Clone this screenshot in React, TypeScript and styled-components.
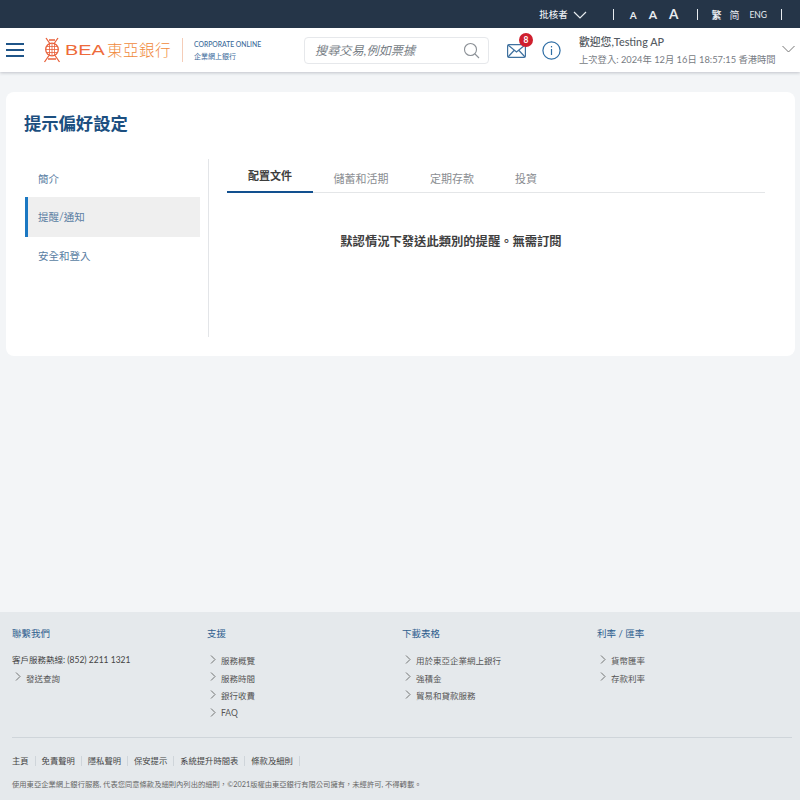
import React from "react";
import styled, { createGlobalStyle } from "styled-components";

const FONT = `Lato, "Noto Sans CJK TC", "Noto Sans", sans-serif`;

const Global = createGlobalStyle`
  html, body { margin: 0; padding: 0; background: #f3f5f7; }
  * { box-sizing: border-box; }
  body { font-family: ${FONT}; }
`;

const Page = styled.div`
  width: 800px;
  height: 800px;
  display: flex;
  flex-direction: column;
  overflow: hidden;
  background: #f3f5f7;
`;

const TopBar = styled.div`
  height: 28px;
  flex: none;
  background: #253548;
  color: #e8ecf0;
  display: flex;
  align-items: center;
  justify-content: flex-end;
  padding: 1px 18px 0 0;
`;
const Role = styled.span`
  font-size: 9.5px;
  font-weight: 500;
  line-height: 12px;
`;
const TopChevron = styled.svg`
  width: 14px;
  height: 8px;
  margin: 0 26px 0 5px;
`;
const Sep = styled.span`
  width: 1px;
  height: 11px;
  background: #e8ecf0;
`;
const SizeGroup = styled.div`
  display: flex;
  align-items: baseline;
  gap: 12px;
  margin: 0 19px 0 16px;
  font-weight: 700;
`;
const SizeA = styled.span<{ $s: number }>`
  font-size: ${(p) => p.$s}px;
  line-height: 14px;
`;
const LangGroup = styled.div`
  display: flex;
  align-items: center;
  margin: 0 14px 0 13px;
  font-size: 10px;
  line-height: 12px;
`;
const LangBold = styled.span`
  font-weight: 700;
  margin-right: 8px;
`;
const LangEng = styled.span`
  font-size: 8.5px;
  margin-left: 10px;
`;

const Header = styled.header`
  height: 44px;
  flex: none;
  background: #fff;
  box-shadow: 0 1px 3px rgba(60, 70, 85, 0.28);
  display: flex;
  align-items: center;
  position: relative;
  padding-left: 6px;
`;
const Burger = styled.div`
  width: 18px;
  display: flex;
  flex-direction: column;
  gap: 4px;
  margin-right: 19px;
`;
const BurgerLine = styled.span`
  height: 2px;
  background: #1f5488;
`;
const LogoWrap = styled.div`
  display: flex;
  align-items: center;
  height: 26px;
`;
const LogoLatin = styled.span`
  font-family: "Liberation Sans", sans-serif;
  font-size: 15.5px;
  line-height: 20px;
  color: #ee6a3a;
  margin-left: 4px;
  transform: scaleX(1.28);
  transform-origin: left center;
  width: 42px;
`;
const LogoCjk = styled.span`
  font-size: 15.5px;
  line-height: 20px;
  font-weight: 300;
  color: #f08a3c;
  width: 64px;
  letter-spacing: 0.5px;
  white-space: nowrap;
`;
const LogoDivider = styled.span`
  width: 1px;
  height: 24px;
  background: #f5cdb8;
  margin: 0 11px 0 11px;
`;
const Corp = styled.div`
  display: flex;
  flex-direction: column;
  width: 110px;
`;
const CorpEn = styled.span`
  font-size: 6.8px;
  line-height: 10px;
  font-weight: 500;
  color: #3a6a9a;
  white-space: nowrap;
`;
const CorpZh = styled.span`
  font-size: 7px;
  line-height: 10px;
  margin-top: 2px;
  color: #3a6a9a;
`;
const Search = styled.div`
  width: 185px;
  height: 27px;
  border: 1px solid #e6e8eb;
  border-radius: 4px;
  display: flex;
  align-items: center;
  justify-content: space-between;
  padding: 0 8px 0 10px;
  margin-right: 18px;
`;
const SearchHint = styled.span`
  font-size: 12.2px;
  font-style: italic;
  color: #777e86;
  white-space: nowrap;
`;
const IconSlot = styled.div`
  position: relative;
  width: 19px;
  height: 17px;
  margin-right: 16px;
`;
const Badge = styled.span`
  position: absolute;
  top: -9px;
  right: -7px;
  width: 14px;
  height: 14px;
  border-radius: 50%;
  background: #cf1f2e;
  color: #fff;
  font-size: 8.5px;
  font-weight: 700;
  line-height: 14px;
  text-align: center;
`;
const Welcome = styled.div`
  margin-left: 18px;
  display: flex;
  flex-direction: column;
  white-space: nowrap;
`;
const WelcomeName = styled.span`
  font-size: 10.8px;
  line-height: 14px;
  font-weight: 500;
  color: #555b62;
`;
const LastLogin = styled.span`
  font-size: 9.3px;
  line-height: 12px;
  margin-top: 5px;
  color: #777c83;
`;
const UserChevron = styled.svg`
  position: absolute;
  right: 5px;
  top: 17px;
  width: 13px;
  height: 8px;
`;

const Main = styled.main`
  flex: 1;
  padding: 20px 5px 0 6px;
`;
const Card = styled.section`
  height: 264px;
  background: #fff;
  border-radius: 8px;
  padding: 20px 30px 19px 18px;
`;
const Title = styled.h1`
  margin: 0;
  font-size: 17.3px;
  line-height: 24px;
  font-weight: 700;
  color: #1c4f80;
`;
const CardBody = styled.div`
  display: flex;
  margin-top: 23px;
  height: 178px;
`;
const Side = styled.nav`
  width: 185px;
  flex: none;
  border-right: 1px solid #e3e5e8;
  padding: 0 8px 0 1px;
`;
const SideItem = styled.div<{ $active?: boolean }>`
  height: ${(p) => (p.$active ? "40px" : "38px")};
  margin-top: ${(p) => (p.$active ? "18px" : "0")};
  display: flex;
  align-items: center;
  padding-left: ${(p) => (p.$active ? "10px" : "13px")};
  padding-bottom: ${(p) => (p.$active ? "1px" : "2px")};
  border-left: ${(p) => (p.$active ? "3px solid #1b78c2" : "none")};
  background: ${(p) => (p.$active ? "#efefef" : "transparent")};
  font-size: 10.5px;
  color: #5a7ea3;
`;
const SideFirst = styled(SideItem)`
  margin-bottom: -18px;
  padding-bottom: 0;
`;
const Content = styled.div`
  flex: 1;
  padding: 0 0 0 18px;
`;
const Tabs = styled.div`
  height: 34px;
  border-bottom: 1px solid #e4e6e8;
  display: flex;
`;
const Tab = styled.div<{ $active?: boolean; $w: number }>`
  width: ${(p) => p.$w}px;
  flex: none;
  height: 34px;
  display: flex;
  align-items: center;
  justify-content: center;
  padding-top: ${(p) => (p.$active ? "0" : "4px")};
  font-size: 11px;
  font-weight: ${(p) => (p.$active ? 700 : 400)};
  color: ${(p) => (p.$active ? "#3d3d3d" : "#8a8d91")};
  border-bottom: ${(p) => (p.$active ? "2px solid #12508f" : "none")};
  white-space: nowrap;
`;
const Notice = styled.div`
  margin-top: 40px;
  text-align: center;
  font-size: 12.3px;
  line-height: 18px;
  font-weight: 700;
  color: #3f3f3f;
  padding-right: 90px;
`;

const Footer = styled.footer`
  height: 188px;
  flex: none;
  background: #e5e9ec;
  padding: 15px 8px 0 12px;
`;
const Columns = styled.div`
  display: grid;
  grid-template-columns: repeat(4, 195px);
  height: 111px;
  border-bottom: 1px solid #cfd5da;
`;
const Column = styled.div`
  display: flex;
  flex-direction: column;
`;
const ColHead = styled.h3`
  margin: 0 0 10.5px;
  font-size: 9.5px;
  line-height: 14px;
  font-weight: 400;
  color: #2f5f8f;
`;
const Hotline = styled.div`
  font-size: 8.5px;
  line-height: 17.5px;
  color: #444;
`;
const LinkRow = styled.div`
  display: flex;
  align-items: center;
  height: 17.6px;
  font-size: 8.5px;
  color: #555;
`;
const Chev = styled.svg`
  width: 6px;
  height: 9px;
  margin: -2px 5px 0 3px;
  flex: none;
`;
const BottomLinks = styled.div`
  display: flex;
  margin-top: 18px;
`;
const BottomLink = styled.span`
  font-size: 8.3px;
  line-height: 10px;
  color: #444;
  padding-right: 6px;
  margin-right: 6px;
  border-right: 1px solid #cfd5da;
`;
const Legal = styled.p`
  margin: 14px 0 0;
  font-size: 7.3px;
  line-height: 10px;
  color: #666;
  white-space: nowrap;
`;

const ChevIcon = () => (
  <Chev viewBox="0 0 6 9" fill="none" stroke="#555" strokeWidth="0.8">
    <path d="M1 .5 5 4.5 1 8.5" />
  </Chev>
);

const Link = ({ children }: { children: React.ReactNode }) => (
  <LinkRow>
    <ChevIcon />
    {children}
  </LinkRow>
);

const BeaMark = () => (
  <svg width="18" height="26" viewBox="0 0 18 26" fill="none" stroke="#e9603a" strokeWidth="1.3">
    <path d="M3 1l3.5 5M15 1l-3.5 5M6 3h6" />
    <circle cx="9" cy="12.5" r="6.3" />
    <path d="M3.500 9.500h11M3 12.500h12M3.500 15.500h11M9 6.500v12M6.500 6.800v11.400M11.500 6.800v11.400" strokeWidth="0.8" />
    <path d="M6 18.500 1.500 25M12 18.500 16.500 25M5 22h8" />
  </svg>
);

export default function App() {
  return (
    <Page>
      <Global />
      <TopBar>
        <Role>批核者</Role>
        <TopChevron viewBox="0 0 14 8" fill="none" stroke="#e8ecf0" strokeWidth="1.2">
          <path d="M1 1l6 6 6-6" />
        </TopChevron>
        <Sep />
        <SizeGroup>
          <SizeA $s={10}>A</SizeA>
          <SizeA $s={12}>A</SizeA>
          <SizeA $s={13.5}>A</SizeA>
        </SizeGroup>
        <Sep />
        <LangGroup>
          <LangBold>繁</LangBold>
          <span>简</span>
          <LangEng>ENG</LangEng>
        </LangGroup>
        <Sep />
      </TopBar>
      <Header>
        <Burger>
          <BurgerLine />
          <BurgerLine />
          <BurgerLine />
        </Burger>
        <LogoWrap>
          <BeaMark />
          <LogoLatin>BEA</LogoLatin>
          <LogoCjk>東亞銀行</LogoCjk>
          <LogoDivider />
        </LogoWrap>
        <Corp>
          <CorpEn>CORPORATE ONLINE</CorpEn>
          <CorpZh>企業網上銀行</CorpZh>
        </Corp>
        <Search>
          <SearchHint>搜尋交易,例如票據</SearchHint>
          <svg width="17" height="17" viewBox="0 0 17 17" fill="none" stroke="#8b9096" strokeWidth="1.1">
            <circle cx="7.5" cy="7.5" r="6" />
            <path d="M12 12l4 4" />
          </svg>
        </Search>
        <IconSlot>
          <svg width="19" height="17" viewBox="0 0 19 17" fill="none" stroke="#3f719f" strokeWidth="1.2">
            <rect x=".6" y="2.6" width="17.8" height="12.8" rx="1.4" />
            <path d="M1 3l8.5 7L18 3M1 15l6-6.5M18 15l-6-6.5" />
          </svg>
          <Badge>8</Badge>
        </IconSlot>
        <svg width="19" height="19" viewBox="0 0 19 19" fill="none" stroke="#2f6ea5" strokeWidth="1.2">
          <circle cx="9.5" cy="9.5" r="8.6" />
          <path d="M9.500 8v6" />
          <path d="M9.500 5v1.400" />
        </svg>
        <Welcome>
          <WelcomeName>歡迎您,Testing AP</WelcomeName>
          <LastLogin>上次登入: 2024年 12月 16日 18:57:15 香港時間</LastLogin>
        </Welcome>
        <UserChevron viewBox="0 0 13 8" fill="none" stroke="#777" strokeWidth="1">
          <path d="M.5 1l6 6 6-6" />
        </UserChevron>
      </Header>
      <Main>
        <Card>
          <Title>提示偏好設定</Title>
          <CardBody>
            <Side>
              <SideFirst>簡介</SideFirst>
              <SideItem $active>提醒/通知</SideItem>
              <SideItem>安全和登入</SideItem>
            </Side>
            <Content>
              <Tabs>
                <Tab $active $w={86}>配置文件</Tab>
                <Tab $w={96}>儲蓄和活期</Tab>
                <Tab $w={86}>定期存款</Tab>
                <Tab $w={62}>投資</Tab>
              </Tabs>
              <Notice>默認情況下發送此類別的提醒。無需訂閱</Notice>
            </Content>
          </CardBody>
        </Card>
      </Main>
      <Footer>
        <Columns>
          <Column>
            <ColHead>聯繫我們</ColHead>
            <Hotline>客戶服務熱線: (852) 2211 1321</Hotline>
            <Link>發送查詢</Link>
          </Column>
          <Column>
            <ColHead>支援</ColHead>
            <Link>服務概覽</Link>
            <Link>服務時間</Link>
            <Link>銀行收費</Link>
            <Link>FAQ</Link>
          </Column>
          <Column>
            <ColHead>下載表格</ColHead>
            <Link>用於東亞企業網上銀行</Link>
            <Link>強積金</Link>
            <Link>貿易和貸款服務</Link>
          </Column>
          <Column>
            <ColHead>利率 / 匯率</ColHead>
            <Link>貨幣匯率</Link>
            <Link>存款利率</Link>
          </Column>
        </Columns>
        <BottomLinks>
          <BottomLink>主頁</BottomLink>
          <BottomLink>免責聲明</BottomLink>
          <BottomLink>隱私聲明</BottomLink>
          <BottomLink>保安提示</BottomLink>
          <BottomLink>系統提升時間表</BottomLink>
          <BottomLink>條款及細則</BottomLink>
        </BottomLinks>
        <Legal>使用東亞企業網上銀行服務, 代表您同意條款及細則內列出的細則，©2021版權由東亞銀行有限公司擁有，未經許可, 不得轉載。</Legal>
      </Footer>
    </Page>
  );
}
